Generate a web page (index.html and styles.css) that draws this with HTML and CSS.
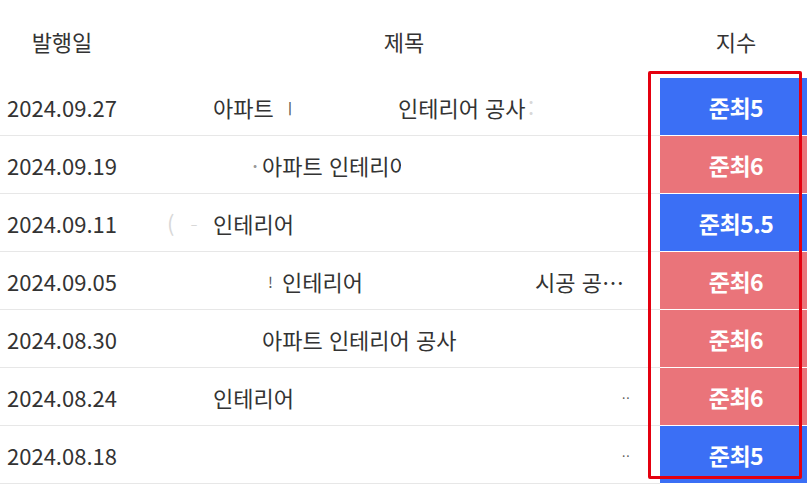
FILE: index.html
```html
<!DOCTYPE html>
<html lang="ko">
<head>
<meta charset="utf-8">
<link rel="stylesheet" href="styles.css">
</head>
<body>
<div class="board">
  <div class="row head">
    <div class="c-date">발행일</div>
    <div class="c-title">제목</div>
    <div class="c-head-idx">지수</div>
  </div>

  <div class="row">
    <div class="c-date">2024.09.27</div>
    <div class="c-title"><span class="p213">아파트</span><span class="frag p283">ㅣ</span><span class="p398">인테리어 공사</span><span class="faint p528">:</span></div>
    <div class="c-idx"><span class="badge blue">준최5</span></div>
  </div>

  <div class="row">
    <div class="c-date">2024.09.19</div>
    <div class="c-title"><span class="dot p252">·</span><span class="p262">아파트 인테리<span class="clip">어</span></span></div>
    <div class="c-idx"><span class="badge red">준최6</span></div>
  </div>

  <div class="row">
    <div class="c-date">2024.09.11</div>
    <div class="c-title"><span class="faint p167">(</span><span class="faint p183">‐ ‐</span><span class="p213">인테리어</span></div>
    <div class="c-idx"><span class="badge blue">준최5.5</span></div>
  </div>

  <div class="row">
    <div class="c-date">2024.09.05</div>
    <div class="c-title"><span class="frag p268">!</span><span class="p282">인테리어</span><span class="p535">시공 공…</span></div>
    <div class="c-idx"><span class="badge red">준최6</span></div>
  </div>

  <div class="row">
    <div class="c-date">2024.08.30</div>
    <div class="c-title"><span class="p262">아파트 인테리어 공사</span></div>
    <div class="c-idx"><span class="badge red">준최6</span></div>
  </div>

  <div class="row">
    <div class="c-date">2024.08.24</div>
    <div class="c-title"><span class="p213">인테리어</span><span class="dots p622">··</span></div>
    <div class="c-idx"><span class="badge red">준최6</span></div>
  </div>

  <div class="row">
    <div class="c-date">2024.08.18</div>
    <div class="c-title"><span class="dots p622">··</span></div>
    <div class="c-idx"><span class="badge blue">준최5</span></div>
  </div>

  <div class="highlight"></div>
</div>
</body>
</html>
```

FILE: styles.css
```css
html, body {
  margin: 0;
  padding: 0;
  background: #fff;
  overflow: hidden;
}
body {
  font-family: "Noto Sans CJK KR", "Noto Sans", sans-serif;
  color: #333;
  font-size: 22px;
}
.board {
  position: relative;
  width: 812px;
}
.row {
  display: grid;
  grid-template-columns: 124px 536px 152px;
  height: 58px;
  align-items: stretch;
}
.row > div {
  display: flex;
  align-items: center;
  border-bottom: 1px solid #e7e7e7;
  white-space: nowrap;
}
.row.head {
  height: 78px;
}
.row.head > div {
  border-bottom: none;
  justify-content: center;
  padding-top: 4px;
}
.row.head .c-title {
  padding-left: 24px;
}
.c-date {
  justify-content: center;
}
.c-title {
  position: relative;
}
.c-title span {
  position: absolute;
  top: 50%;
  transform: translateY(-50%);
}
.row > .c-idx {
  border-bottom: 1px solid #fff;
  display: block;
}
.badge {
  display: flex;
  align-items: center;
  justify-content: center;
  height: 100%;
  color: #fff;
  font-weight: 700;
  font-size: 23px;
  letter-spacing: -0.5px;
}
.blue { background: #3b6ff5; }
.red { background: #ea747a; }
.faint { color: #d8d8d8; }
.frag { color: #555; font-size: 15px; }
.dot { color: #999; }
.dots { color: #555; font-size: 12px; letter-spacing: 1px; }
.clip {
  display: inline-block;
  width: 11px;
  overflow: hidden;
  vertical-align: bottom;
  position: static !important;
  transform: none !important;
}
.p167 { left: 43px; }
.p183 { left: 59px; }
.p213 { left: 89px; }
.p252 { left: 128px; }
.p262 { left: 138px; }
.p268 { left: 144px; }
.p282 { left: 158px; }
.p283 { left: 159px; }
.p398 { left: 274px; }
.p528 { left: 404px; }
.p535 { left: 411px; }
.p622 { left: 498px; }
.highlight {
  position: absolute;
  left: 648px;
  top: 71px;
  width: 148px;
  height: 402px;
  border: 3px solid #e4000f;
  border-radius: 2px;
  pointer-events: none;
}
```
